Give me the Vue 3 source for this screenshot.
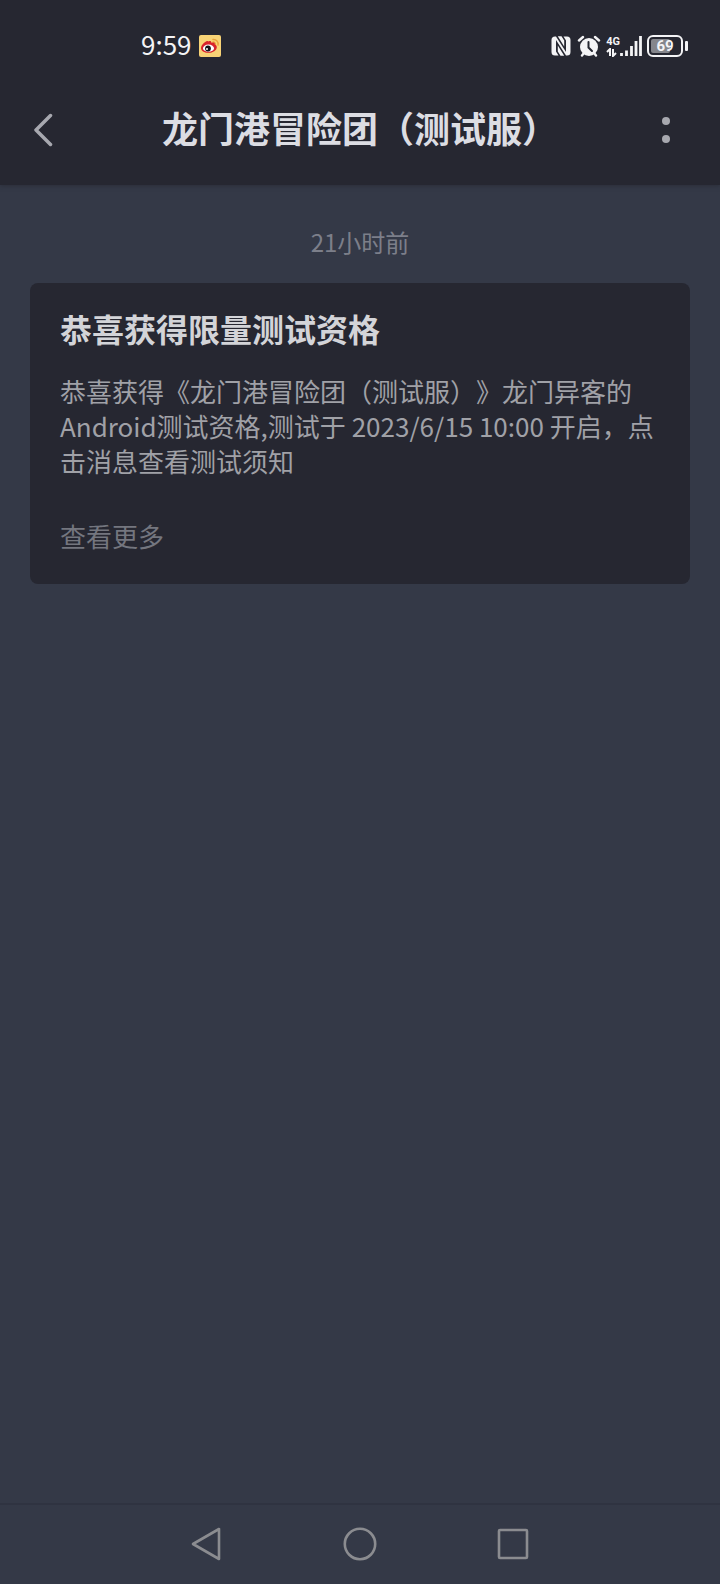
<script setup>
import { ref } from 'vue';

const title = ref('龙门港冒险团（测试服）');
const battery = ref(69);

const messages = ref([
    {
        id: 1,
        time: '21小时前',
        title: '恭喜获得限量测试资格',
        content: '恭喜获得《龙门港冒险团（测试服）》龙门异客的Android测试资格,测试于 2023/6/15 10:00 开启，点击消息查看测试须知',
    },
]);
</script>

<template>
    <div class="page">
        <div class="top">
            <div class="status">
                <div class="status-left">
                    <span class="clock">9:59</span>
                    <svg width="22" height="22" viewBox="0 0 22 22" aria-hidden="true">
                        <rect width="22" height="22" rx="2" fill="#f8d376" />
                        <path d="M14 4.500a4.500 4.500 0 0 1 5 5.500" fill="none" stroke="#e9a33c" stroke-width="1.500" stroke-linecap="round" />
                        <path d="M13.800 7a2.200 2.200 0 0 1 2.600 2.600" fill="none" stroke="#e9a33c" stroke-width="1.200" stroke-linecap="round" />
                        <path d="M9.500 6.500c1.500-.8 3-.5 2.800 1.300 2-.8 4-.5 3.500 1.700 1.400.5 2 1.500 2 2.700 0 3-3.800 5.600-8.300 5.600S2 15.800 2 13c0-2.600 3.500-6.600 6.500-7 .6 0 .9.200 1 .5z" fill="#d9232b" />
                        <ellipse cx="9.500" cy="13.200" rx="5.500" ry="3.600" fill="#fff" />
                        <circle cx="9" cy="13.500" r="2.900" fill="#15151a" />
                        <circle cx="8" cy="14" r="1" fill="#fff" />
                    </svg>
                </div>
                <div class="status-right">
                    <svg width="22" height="22" viewBox="0 0 22 22" aria-hidden="true">
                        <path d="M5 1.500h1L16 17V5.500L13.500 1.500H17a3.500 3.500 0 0 1 3.500 3.500v12a3.500 3.500 0 0 1-3.500 3.500h-1L6 5v11.500l2.500 4H5A3.500 3.500 0 0 1 1.500 17V5A3.500 3.500 0 0 1 5 1.500z" fill="#f4f4f6" />
                        <path d="M7.800 1.200h3.700l2.700 4.300v6zM14.200 20.800h-3.700l-2.700-4.300v-6z" fill="#f4f4f6" />
                    </svg>
                    <svg width="24" height="22" viewBox="0 0 24 22" aria-hidden="true">
                        <circle cx="12" cy="12" r="9" fill="#f4f4f6" />
                        <path d="M2 5.500L6 2M22 5.500L18 2M5 20.500L7 18M19 20.500L17 18" stroke="#f4f4f6" stroke-width="2.400" stroke-linecap="round" />
                        <path d="M11.500 7v5.500l3.500 3.500" fill="none" stroke="#252731" stroke-width="2" stroke-linecap="round" />
                    </svg>
                    <div class="signal">
                        <div class="network">
                            <span>4G</span>
                            <svg width="12" height="9" viewBox="0 0 12 9" aria-hidden="true">
                                <path d="M1 4L4 1v7M7 1v7l3-3" fill="none" stroke="#f4f4f6" stroke-width="2" />
                            </svg>
                        </div>
                        <svg width="22" height="22" viewBox="0 0 22 22" aria-hidden="true">
                            <path d="M1.500 18v3M6.500 15.500V21M11.500 11v10M16 6v15M20.500 1v20" stroke="#f4f4f6" stroke-width="2.800" />
                        </svg>
                    </div>
                    <div class="battery">
                        <div class="battery-body">
                            <div class="battery-fill" :style="{ width: battery + '%' }"></div>
                            <span class="battery-text">{{ battery }}</span>
                        </div>
                        <div class="battery-tip"></div>
                    </div>
                </div>
            </div>
            <header class="header">
                <button class="header-btn" aria-label="返回">
                    <svg width="20" height="34" viewBox="0 0 20 34">
                        <path d="M16.500 2.500L2 17l14.500 14.500" fill="none" stroke="#a7a8af" stroke-width="3.500" stroke-linecap="round" stroke-linejoin="round" />
                    </svg>
                </button>
                <h1>{{ title }}</h1>
                <button class="header-btn more-btn" aria-label="更多">
                    <svg width="8" height="28" viewBox="0 0 8 28">
                        <circle cx="4" cy="5" r="4" fill="#a7a8af" />
                        <circle cx="4" cy="23" r="4" fill="#a7a8af" />
                    </svg>
                </button>
            </header>
        </div>

        <main class="list">
            <section v-for="message in messages" :key="message.id">
                <p class="time">{{ message.time }}</p>
                <article class="card">
                    <h2>{{ message.title }}</h2>
                    <p class="content">{{ message.content }}</p>
                    <a class="link" href="#">查看更多</a>
                </article>
            </section>
        </main>

        <nav class="nav">
            <button aria-label="后退">
                <svg width="36" height="36" viewBox="0 0 36 36">
                    <path d="M31 3v30L5 18z" fill="none" stroke="#8b8c90" stroke-width="2.600" stroke-linejoin="round" />
                </svg>
            </button>
            <button aria-label="主页">
                <svg width="36" height="36" viewBox="0 0 36 36">
                    <circle cx="18" cy="18" r="15.200" fill="none" stroke="#8b8c90" stroke-width="2.600" />
                </svg>
            </button>
            <button aria-label="最近任务">
                <svg width="36" height="36" viewBox="0 0 36 36">
                    <rect x="3" y="4" width="28" height="28" rx="1" fill="none" stroke="#8b8c90" stroke-width="2.600" />
                </svg>
            </button>
        </nav>
    </div>
</template>

<style>
body {
    margin: 0;
    background: #343947;
}
</style>

<style scoped>
.page {
    display: flex;
    flex-direction: column;
    min-height: 100vh;
    background: #343947;
    font-family: "Noto Sans CJK SC", sans-serif;
    text-spacing-trim: space-all;
}

h1, h2, p {
    margin: 0;
}

button {
    display: flex;
    align-items: center;
    justify-content: center;
    padding: 0;
    border: none;
    background: none;
    cursor: pointer;
}

svg {
    display: block;
}

.top {
    background: #262731;
    box-shadow: 0 1px 4px rgba(37, 39, 49, 0.6);
}

.status {
    display: flex;
    align-items: center;
    justify-content: space-between;
    height: 60px;
    padding: 16px 32px 0 141px;
    color: #f4f4f6;
}

.status-left {
    display: flex;
    align-items: center;
    gap: 7px;
}

.status-right {
    display: flex;
    align-items: center;
    gap: 5px;
}

.clock {
    padding-bottom: 4px;
    font-size: 26px;
    line-height: 30px;
}

.signal {
    display: flex;
    align-items: center;
}

.network {
    font-family: "Liberation Sans Narrow", Roboto, sans-serif;
    font-size: 11px;
    font-weight: 700;
    line-height: 12px;
}

.battery {
    display: flex;
    align-items: center;
    gap: 2px;
}

.battery-body {
    position: relative;
    width: 28px;
    height: 14px;
    padding: 2px;
    border: 2px solid #f4f4f6;
    border-radius: 6px;
}

.battery-fill {
    height: 100%;
    border-radius: 2px;
    background: #85868c;
}

.battery-text {
    position: absolute;
    inset: 0;
    font-family: Roboto, sans-serif;
    font-size: 15px;
    font-weight: 700;
    line-height: 18px;
    text-align: center;
}

.battery-tip {
    width: 3px;
    height: 10px;
    border-radius: 1px;
    background: #f4f4f6;
}

.header {
    display: flex;
    align-items: center;
    height: 107px;
    padding: 0 24px 2px;
}

.header-btn {
    width: 40px;
    height: 60px;
}

.more-btn {
    width: 60px;
    margin-left: -20px;
}

h1 {
    flex: 1;
    padding-bottom: 6px;
    font-size: 36px;
    font-weight: 700;
    line-height: 52px;
    text-align: center;
    white-space: nowrap;
    color: #dcdde3;
}

.list {
    flex: 1;
    padding: 40px 30px;
}

.time {
    margin-bottom: 24px;
    font-size: 24px;
    line-height: 34px;
    text-align: center;
    color: #7c7f8a;
}

.card {
    padding: 22px 30px 30px;
    border-radius: 8px;
    background: #262731;
}

h2 {
    font-size: 32px;
    font-weight: 700;
    line-height: 46px;
    color: #d3d4d8;
}

.content {
    margin: 22px 0 40px;
    font-size: 26px;
    line-height: 35px;
    color: #a0a1a7;
}

.link {
    display: block;
    font-size: 26px;
    line-height: 36px;
    text-decoration: none;
    color: #74767f;
}

.nav {
    display: grid;
    grid-template-columns: repeat(3, 1fr);
    height: 78px;
    padding: 0 18% 1px;
    border-top: 2px solid #2f3341;
}
</style>
